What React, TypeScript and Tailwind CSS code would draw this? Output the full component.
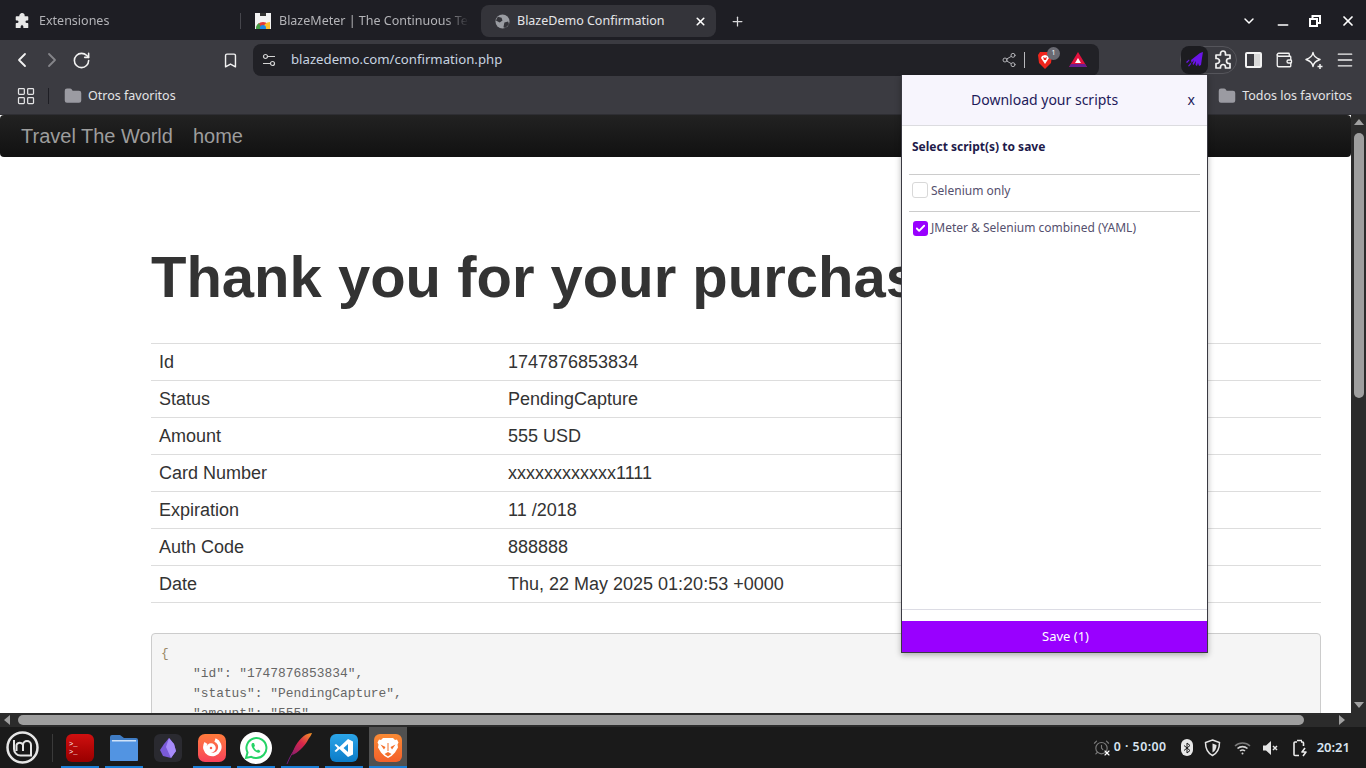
import { ChevronDown, ChevronLeft, ChevronRight, Minus, Plus, RotateCw, Bookmark, X, Share2, Wallet, Menu, LayoutGrid, Folder, AlarmClock, Check } from 'lucide-react';

const rows = [
  ['Id', '1747876853834'],
  ['Status', 'PendingCapture'],
  ['Amount', '555 USD'],
  ['Card Number', 'xxxxxxxxxxxx1111'],
  ['Expiration', '11 /2018'],
  ['Auth Code', '888888'],
  ['Date', 'Thu, 22 May 2025 01:20:53 +0000'],
];

const puzzlePath = 'M7.500 3.500a2.500 2.500 0 015 0V5H17v3.500h-1a2.500 2.500 0 000 5h1V18h-4.500v-1a2.500 2.500 0 00-5 0v1H3v-4.500h1a2.500 2.500 0 000-5H3V5h4.500z';

function PuzzleIcon({ size, filled, className }: { size: number; filled?: boolean; className?: string }) {
  return (
    <svg width={size} height={size} viewBox="0 0 20 20" fill={filled ? '#e8e8e8' : 'none'} stroke={filled ? '#e8e8e8' : '#f2f2f2'} strokeWidth="1.700" strokeLinejoin="round" className={className}>
      <path d={puzzlePath} />
    </svg>
  );
}

function BraveLion() {
  return (
    <svg width="28" height="28" viewBox="0 0 28 28">
      <defs>
        <linearGradient id="braveBg" x1="0" y1="0" x2="0" y2="1">
          <stop stopColor="#f98a35" />
          <stop offset="1" stopColor="#f4602a" />
        </linearGradient>
      </defs>
      <rect width="28" height="28" rx="6" fill="url(#braveBg)" />
      <path d="M9 4h10l2 2 2-.5 1.500 3-1 2 .5 3-3 5-3.500 3.500L14 24l-3.500-2-3.500-3.500-3-5 .5-3-1-2L5 5.500 7 6z" fill="#fff" />
      <path d="M6.500 10.500l5 2.500-1.500 2.500zM21.500 10.500l-5 2.500 1.500 2.500zM10.500 20l3.500-2 3.500 2-3.500 2.500z" fill="#f4702c" />
      <path d="M14 9v8" stroke="#f4702c" strokeWidth="1" />
    </svg>
  );
}

function Tab({ w, gap, icon, title, active }: { w: string; gap: string; icon: React.ReactNode; title: string; active?: boolean }) {
  return (
    <div className={`flex h-8 items-center rounded-lg pl-[13px] ${w} ${active ? 'bg-[#34343a] pr-[8px] text-[#e4e4e8]' : 'pr-3 text-[#b4b4b8]'}`}>
      <span className={`flex w-[17px] shrink-0 justify-center ${gap}`}>{icon}</span>
      <span className={`flex-1 overflow-hidden whitespace-nowrap text-[12.5px] ${active ? '' : '[mask-image:linear-gradient(to_left,transparent,black_24px)]'}`}>{title}</span>
      {active && <X size={13} strokeWidth={3} className="ml-2 mr-[1px] text-white" />}
    </div>
  );
}

function TaskItem({ children, on, current }: { children: React.ReactNode; on?: boolean; current?: boolean }) {
  return (
    <div className={`relative flex h-[41px] w-[38px] items-center justify-center ${current ? 'bg-[#505050]' : ''}`}>
      {children}
      {on && <div className="absolute bottom-0 left-0 h-[2px] w-full bg-[#1a7fd8]" />}
    </div>
  );
}

export default function App() {
  return (
    <div className="relative flex h-[768px] w-[1366px] flex-col overflow-hidden bg-white font-['Noto_Sans',sans-serif]">
      {/* Tab strip */}
      <div className="flex h-10 shrink-0 items-center bg-[#1e1e24] pt-[2px]">
        <Tab w="w-[240px]" gap="mr-[9px]" title="Extensiones" icon={<PuzzleIcon size={16} filled />} />
        <div className="h-4 w-px bg-[#46464c]" />
        <Tab
          w="w-[240px]"
          gap="mr-[8px]"
          title="BlazeMeter | The Continuous Tes"
          icon={
            <svg width="16" height="16" viewBox="0 0 16 16">
              <rect width="16" height="16" fill="#f3f3f3" />
              <rect x="5" y="0" width="6" height="3" fill="#333" />
              <path d="M1 16a7 7 0 0114 0z" fill="#e53935" />
              <path d="M8 16a7 7 0 017-7v7z" fill="#fbc02d" />
              <path d="M1 16a7 7 0 013-6l3 6z" fill="#43a047" />
              <circle cx="8" cy="15" r="3" fill="#1e88e5" />
            </svg>
          }
        />
        <Tab
          w="w-[235px]"
          gap="mr-[6px]"
          active
          title="BlazeDemo Confirmation"
          icon={
            <svg width="15" height="15" viewBox="0 0 16 16">
              <circle cx="8" cy="8" r="7.500" fill="#9a9ca2" />
              <path d="M3 3l4 1 1 3-3 2-4-2zM10 9l4-1 1 3-4 4-2-1z" fill="#34343a" />
            </svg>
          }
        />
        <Plus size={15} strokeWidth={2} className="ml-[14px] text-[#d8d8da]" />
        <div className="flex-1" />
        <div className="flex items-center pr-[10px] text-white">
          <ChevronDown size={16} strokeWidth={2.2} />
          <Minus size={16} strokeWidth={2.4} className="ml-[18px] translate-y-[4px]" />
          <svg width="14" height="14" viewBox="0 0 14 14" fill="none" stroke="#fff" strokeWidth="2" className="ml-[17px]">
            <rect x="4.500" y="2" width="7.500" height="7" />
            <rect x="2" y="5" width="7" height="7" fill="#1e1e24" />
          </svg>
          <X size={16} strokeWidth={2.6} className="ml-[18px]" />
        </div>
      </div>

      {/* Toolbar */}
      <div className="flex h-10 shrink-0 items-center bg-[#3b3b41] text-[#f2f2f2]">
        <ChevronLeft size={24} strokeWidth={1.8} className="ml-[10px]" />
        <ChevronRight size={24} strokeWidth={1.8} className="ml-[6px] text-[#85858a]" />
        <RotateCw size={19} strokeWidth={2} className="ml-[8px]" />
        <Bookmark size={17} strokeWidth={2} className="ml-[131px]" />
        <div className="ml-[14px] flex h-8 w-[846px] items-center rounded-lg bg-[#212126] pr-[11px]">
          <svg width="14" height="14" viewBox="0 0 14 14" fill="none" stroke="#d4d4d4" strokeWidth="1.200" className="ml-[9px]">
            <circle cx="3.500" cy="3.500" r="2" />
            <path d="M6 3.500h7M1 10.500h7" />
            <circle cx="10.500" cy="10.500" r="2" />
          </svg>
          <span className="ml-[15px] text-[13.2px] text-[#c8d4e0]">blazedemo.com/confirmation.php</span>
          <div className="flex-1" />
          <Share2 size={16} strokeWidth={1.4} className="text-[#b8b8bc]" />
          <div className="ml-[7px] h-4 w-px bg-[#b8b8bc]" />
          <div className="relative ml-[12px]">
            <svg width="16" height="18" viewBox="0 0 16 18">
              <path d="M3 1h10l2 3-1 8-6 6-6-6-1-8z" fill="#f0261d" />
              <path d="M8 4l3 1 1 2-2 3-2 3-2-3-2-3 1-2z" fill="#fff" />
              <path d="M8 7l-2-1 1 3h2l1-3z" fill="#f0261d" />
            </svg>
            <div className="absolute -right-[7px] -top-[4px] flex h-[13px] w-[13px] items-center justify-center rounded-full bg-[#6a6a72] text-[7px] text-white">1</div>
          </div>
          <svg width="20" height="16" viewBox="0 0 20 16" className="ml-[15px]">
            <path d="M10 0l9 15H1z" fill="#e3123e" />
            <path d="M1 15h18l-2-3H3z" fill="#6b1d8f" />
            <path d="M10 6l3 5H7z" fill="#fff" />
          </svg>
        </div>
        <div className="ml-[81px] flex h-[28px] w-[57px] items-center rounded-[14px] border border-[#55555b]">
          <div className="flex h-[28px] w-[27px] items-center justify-center rounded-lg bg-[#1c1c20]">
            <svg width="19" height="16" viewBox="0 0 19 16" fill="#6a14e8">
              <path d="M6 8L15 1l3-1-1 6-1 7-2 1-1-3-1 3-1.500-1 .5-4-2.500 4-1-1 1.500-4-2.500 3z" />
              <path d="M1 10l3-2.500.5 1L2 11zM3 14l2.500-3 .8.8L4 14.500z" />
            </svg>
          </div>
          <PuzzleIcon size={20} className="ml-[5px]" />
        </div>
        <div className="ml-[8px] flex h-[16px] w-[17px] overflow-hidden rounded-[2px] border-2 border-[#f2f2f2]">
          <div className="flex-1" />
          <div className="w-[6px] bg-[#d8d8d8]" />
        </div>
        <Wallet size={18} strokeWidth={1.8} className="ml-[13px]" />
        <svg width="19" height="19" viewBox="0 0 19 19" fill="none" stroke="#f2f2f2" strokeWidth="1.500" strokeLinejoin="round" className="ml-[12px]">
          <path d="M8 1.500c.6 4 2.500 5.500 7 7-4.500 1.500-6.400 3-7 7-.6-4-2.500-5.500-7-7 4.500-1.500 6.400-3 7-7z" />
          <path d="M15 13v5M12.500 15.500h5" />
        </svg>
        <Menu size={20} strokeWidth={1.6} className="ml-[11px]" />
      </div>

      {/* Bookmarks bar */}
      <div className="flex h-[35px] shrink-0 items-center border-b border-[#2e2e33] bg-[#3b3b41] pb-[2px] text-[12.5px] text-[#e4e4e6]">
        <LayoutGrid size={20} strokeWidth={1.5} className="ml-[16px]" />
        <div className="ml-[12px] h-4 w-px bg-[#1e1e24]" />
        <Folder size={18} fill="#9b9ba2" stroke="#9b9ba2" className="ml-[15px]" />
        <span className="ml-[6px]">Otros favoritos</span>
        <div className="flex-1" />
        <Folder size={18} fill="#9b9ba2" stroke="#9b9ba2" />
        <span className="ml-[6px] mr-[14px]">Todos los favoritos</span>
      </div>

      {/* Page viewport */}
      <div className="flex min-h-0 flex-1">
        <div className="min-w-0 flex-1 overflow-hidden bg-white font-['Liberation_Sans',sans-serif] text-[#333]">
          <div className="flex h-[42px] items-center gap-[20px] rounded-[4px] bg-gradient-to-b from-[#222] to-[#111] pl-[21px] text-[20px] text-[#9d9d9d]">
            <span>Travel The World</span>
            <span>home</span>
          </div>
          <div className="pl-[151px] pr-[30px]">
            <h1 className="mt-[82px] whitespace-nowrap text-[58px] font-bold leading-[76px]">Thank you for your purchase today!</h1>
            <div className="mt-[28px] border-b border-[#ddd]">
              {rows.map(([label, value]) => (
                <div key={label} className="flex h-[37px] items-center border-t border-[#ddd] text-[18px]">
                  <div className="w-[357px] pl-2">{label}</div>
                  <div>{value}</div>
                </div>
              ))}
            </div>
            <pre className="mt-[30px] h-[200px] rounded-[4px] border border-[#ccc] bg-[#f5f5f5] pl-[10px] pt-[10px] font-['Liberation_Mono',monospace] text-[12.9px] leading-[20px] text-[#666]">
              <span className="-ml-[1px] text-[#998866]">{'{'}</span>
              {`
    "id": "1747876853834",
    "status": "PendingCapture",
    "amount": "555",`}
            </pre>
          </div>
        </div>
        {/* Vertical scrollbar */}
        <div className="flex w-[15px] shrink-0 flex-col items-center bg-[#2b2b2b] pt-[4px]">
          <div className="h-0 w-0 border-x-[5px] border-b-[6px] border-x-transparent border-b-[#a0a0a0]" />
          <div className="mt-[8px] h-[265px] w-[10px] rounded-[5px] bg-[#9e9e9e]" />
          <div className="flex-1" />
          <div className="mb-[5px] h-0 w-0 border-x-[5px] border-t-[6px] border-x-transparent border-t-[#a0a0a0]" />
        </div>
      </div>

      {/* Horizontal scrollbar */}
      <div className="flex h-[14px] shrink-0 items-center bg-[#2b2b2b] pl-[4px]">
        <div className="h-0 w-0 border-y-[5px] border-r-[6px] border-y-transparent border-r-[#a0a0a0]" />
        <div className="ml-[8px] h-[10px] w-[1286px] rounded-[5px] bg-[#9e9e9e]" />
        <div className="ml-[35px] h-0 w-0 border-y-[5px] border-l-[6px] border-y-transparent border-l-[#a0a0a0]" />
      </div>

      {/* Taskbar */}
      <div className="flex h-[41px] shrink-0 items-center bg-[#1a1a1a] text-[#d8e4f0]">
        <svg width="33" height="33" viewBox="0 0 33 33" fill="none" stroke="#e6e6e6" className="ml-[6px]">
          <circle cx="16.500" cy="16.500" r="15" strokeWidth="2.500" />
          <path d="M8 9v9a6.500 6.500 0 006.500 6.500H25V14a4 4 0 00-8 0v6M17 14a3.500 3.500 0 00-6.500 0v6" strokeWidth="2" />
        </svg>
        <div className="ml-[13px] h-[28px] w-px bg-[#3a3a3a]" />
        <div className="ml-[8px] flex gap-[6px]">
          <TaskItem on>
            <div className="flex h-[28px] w-[28px] flex-col justify-center rounded-[6px] bg-gradient-to-b from-[#d01010] to-[#900] pl-[3px] font-['Liberation_Mono',monospace] text-[7px] leading-[8px] text-white">
              <span>&gt;_</span>
              <span>&gt;_</span>
            </div>
          </TaskItem>
          <TaskItem on>
            <svg width="28" height="26" viewBox="0 0 28 26">
              <path d="M0 2a2 2 0 012-2h8l4 3h12a2 2 0 012 2v19a2 2 0 01-2 2H2a2 2 0 01-2-2z" fill="#3f7cc4" />
              <rect y="5" width="28" height="21" rx="1" fill="#5294e2" />
              <rect x="2" y="5" width="24" height="1.500" fill="#cfe2f8" />
            </svg>
          </TaskItem>
          <TaskItem>
            <div className="flex h-[28px] w-[28px] items-center justify-center rounded-[6px] bg-[#2a2a30]">
              <svg width="16" height="20" viewBox="0 0 16 20">
                <path d="M9 0l5 6 2 7-5 7-8-2-3-6 4-6z" fill="#7a5ad8" />
                <path d="M9 0L6 9l5 11 5-7-2-7z" fill="#a78bfa" />
              </svg>
            </div>
          </TaskItem>
          <TaskItem on>
            <div className="flex h-[28px] w-[28px] items-center justify-center rounded-[7px] bg-gradient-to-b from-[#ff7a3a] to-[#f8405a]">
              <svg width="20" height="20" viewBox="0 0 20 20" fill="none" stroke="#fff" strokeWidth="3.500">
                <path d="M13 2a7.500 7.500 0 11-9 3M9 7a3 3 0 100 6 3 3 0 000-6z" />
              </svg>
            </div>
          </TaskItem>
          <TaskItem on>
            <div className="flex h-8 w-8 items-center justify-center rounded-full bg-white">
              <svg width="24" height="24" viewBox="0 0 24 24">
                <path d="M2 22l1.500-5.500A10 10 0 1112 22a10 10 0 01-4.800-1.200z" fill="none" stroke="#25d366" strokeWidth="2" />
                <path d="M8.500 7c-1.500 1-1.500 3 .5 6s5 4.500 6.500 3.500l1-1.500-2.500-1.500-1 1c-1-.5-2.500-2-3-3.500l1-1L10 7z" fill="#25d366" />
              </svg>
            </div>
          </TaskItem>
          <TaskItem on>
            <svg width="32" height="34" viewBox="0 0 32 34" fill="none">
              <defs>
                <linearGradient id="feather" x1="28" y1="1" x2="4" y2="30" gradientUnits="userSpaceOnUse">
                  <stop stopColor="#f8a023" />
                  <stop offset="0.4" stopColor="#d8264a" />
                  <stop offset="1" stopColor="#6a1a80" />
                </linearGradient>
              </defs>
              <path d="M8 24C10 15 16 7 22 3.500c2-1 4-1.500 6-1.500-1 2.500-2 4-3.500 6-2 4-5 8-8 10.500-2.500 2.500-6 5-8.500 5.500z" fill="url(#feather)" />
              <path d="M3 33c3-8 8-16 15-24" stroke="url(#feather)" strokeWidth="1" />
            </svg>
          </TaskItem>
          <TaskItem on>
            <div className="flex h-[28px] w-[28px] items-center justify-center rounded-[6px] bg-gradient-to-b from-[#2ba5e8] to-[#0a7cc8]">
              <svg width="20" height="20" viewBox="0 0 20 20" fill="#fff">
                <path d="M14 1l5 2.500v13L14 19 5.500 11 2 14l-1.500-1 3-3-3-3L2 6l3.500 3zM14 6l-4.500 4 4.500 4z" />
              </svg>
            </div>
          </TaskItem>
          <TaskItem on current>
            <BraveLion />
          </TaskItem>
        </div>
        <div className="flex-1" />
        <div className="flex items-center pr-[16px] text-[12.3px] font-semibold">
          <div className="relative">
            <AlarmClock size={17} strokeWidth={1.6} className="text-[#7c7c7c]" />
            <X size={8} strokeWidth={3.5} className="absolute -bottom-[1px] -right-[1px] text-white" />
          </div>
          <span className="ml-[4px] tracking-[0.5px]">0 · 50:00</span>
          <div className="ml-[14px] flex h-[17px] w-[12px] items-center justify-center rounded-[6px] bg-[#e8e8e8]">
            <svg width="8" height="12" viewBox="0 0 8 12" fill="none" stroke="#1a1a1a" strokeWidth="1">
              <path d="M1 3.500l6 5L4 11V1l3 2.500-6 5" />
            </svg>
          </div>
          <svg width="17" height="18" viewBox="0 0 17 18" fill="none" className="ml-[11px]">
            <path d="M8.500 1l7 2.500c0 6-2 10.500-7 13-5-2.500-7-7-7-13z" stroke="#e4e4e4" strokeWidth="1.500" />
            <path d="M8.500 4.500l4 1.500c0 3.500-1.200 6-4 7.500z" fill="#e4e4e4" />
          </svg>
          <svg width="17" height="14" viewBox="0 0 17 14" fill="none" stroke="#d4d4d4" strokeWidth="1.600" className="ml-[13px]">
            <path d="M1 5a11 11 0 0115 0" stroke="#7a7a7a" />
            <path d="M3.500 7.500a7.500 7.500 0 0110 0M6 10a4 4 0 015 0" />
            <circle cx="8.500" cy="12.500" r="1" fill="#d4d4d4" stroke="none" />
          </svg>
          <svg width="16" height="14" viewBox="0 0 16 14" fill="#e4e4e4" className="ml-[12px]">
            <path d="M0 4.500h3L8 0v14l-5-4.500H0z" />
            <path d="M10 5l4 4M14 5l-4 4" stroke="#e4e4e4" strokeWidth="1.500" />
          </svg>
          <svg width="15" height="18" viewBox="0 0 15 18" fill="none" stroke="#ececec" strokeWidth="1.600" className="ml-[14px]">
            <path d="M4 1.500h5M8 3h1.500a1 1 0 011 1v3M6 16.500H2a1 1 0 01-1-1V4a1 1 0 011-1h2" />
            <path d="M12 9l-3 4h4l-3 4" strokeLinejoin="round" />
          </svg>
          <span className="ml-[9px] text-[13px]">20:21</span>
        </div>
      </div>

      {/* Extension popup */}
      <div className="absolute left-[901px] top-[75px] flex h-[578px] w-[307px] flex-col border border-t-0 border-[#3a3a42] bg-white shadow-[0_2px_6px_rgba(0,0,0,0.3)]">
        <div className="flex h-[51px] shrink-0 items-center border-b border-[#dcdce0] bg-[#f7f5fd] pb-[2px] pl-[69px] pr-3 text-[14px] text-[#1e1a5a]">
          <span className="flex-1">Download your scripts</span>
          <span>x</span>
        </div>
        <div className="flex-1 px-[7px]">
          <div className="h-[48px] pl-[3px] pt-[12px] text-[12px] font-bold text-[#1e1a4a]">Select script(s) to save</div>
          <div className="flex h-[37px] items-start border-t border-[#ccc] pl-[3px] pt-[7px] text-[12px] text-[#55506e]">
            <div className="mr-[3px] h-4 w-4 rounded-[3px] border border-[#d8d8d8]" />
            <span>Selenium only</span>
          </div>
          <div className="flex items-start border-t border-[#ccc] pl-[3px] pt-[7px] text-[12px] text-[#55506e]">
            <div className="ml-px mr-[3px] mt-[2px] flex h-[15px] w-[15px] items-center justify-center rounded-[3px] bg-[#9900ff]">
              <Check size={11} strokeWidth={4} className="text-white" />
            </div>
            <span>JMeter &amp; Selenium combined (YAML)</span>
          </div>
        </div>
        <div className="h-[12px] shrink-0 border-t border-[#dcdce4]" />
        <div className="flex h-[31px] shrink-0 items-center justify-center bg-[#9900ff] pl-[22px] text-[13px] text-white">Save (1)</div>
      </div>
    </div>
  );
}
